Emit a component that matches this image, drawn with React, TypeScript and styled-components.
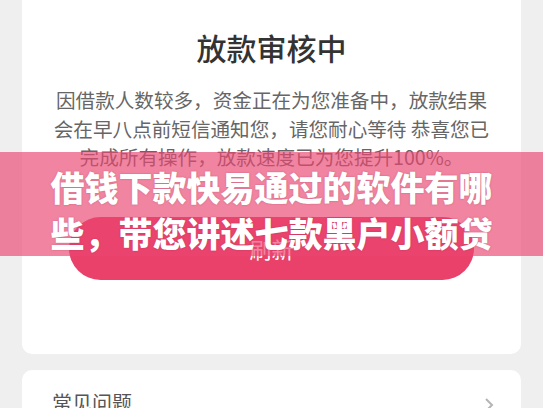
import React from 'react'
import styled, { createGlobalStyle } from 'styled-components'

const GlobalStyle = createGlobalStyle`
  html, body {
    margin: 0;
    padding: 0;
    background: #efefef;
    overflow: hidden;
  }
  body {
    font-family: "Noto Sans CJK SC", "Noto Sans", sans-serif;
  }
`

function App() {
  return (
    <>
      <GlobalStyle />
      <Page>
        <StatusCard>
          <Title>放款审核中</Title>
          <Message>
            因借款人数较多，资金正在为您准备中，放款结果
            <br />
            会在早八点前短信通知您，请您耐心等待 恭喜您已
            <br />
            完成所有操作，放款速度已为您提升100%。
          </Message>
          <RefreshButton>刷新</RefreshButton>
        </StatusCard>
        <FaqCard>
          <FaqLabel>常见问题</FaqLabel>
          <Chevron viewBox='0 0 16 16'>
            <path d='M5 2 L11 8 L5 14' />
          </Chevron>
        </FaqCard>
        <Banner>
          借钱下款快易通过的软件有哪
          <br />
          些，带您讲述七款黑户小额贷
        </Banner>
      </Page>
    </>
  )
}

export default App

const Page = styled.div`
  display: flex;
  flex-direction: column;
  gap: 16px;
  height: 408px;
  padding: 0 22px;
  position: relative;
  width: 543px;
  box-sizing: border-box;
`

const StatusCard = styled.div`
  align-items: center;
  background: #ffffff;
  border-radius: 0 0 10px 10px;
  display: flex;
  flex-direction: column;
  padding: 27px 47px 74px;
`

const Title = styled.h1`
  color: #333333;
  font-size: 30px;
  font-weight: 500;
  line-height: 40px;
  margin: 0;
`

const Message = styled.p`
  color: #666666;
  font-size: 19.6px;
  line-height: 28.5px;
  margin: 19px -40px 0;
  text-align: center;
  white-space: nowrap;
`

const RefreshButton = styled.button`
  background: #e9416a;
  border: none;
  border-radius: 32px;
  color: #ffffff;
  font-family: inherit;
  font-size: 22px;
  height: 63px;
  margin-top: 45px;
  width: 100%;
`

const FaqCard = styled.div`
  align-items: center;
  background: #ffffff;
  border-radius: 10px;
  display: flex;
  height: 70px;
  justify-content: space-between;
  padding: 0 24px 0 30px;
  align-items: flex-start;
  padding-top: 19px;
`

const FaqLabel = styled.span`
  color: #555555;
  font-size: 20px;
  line-height: 28px;
`

const Chevron = styled.svg`
  fill: none;
  height: 16px;
  margin-top: 8px;
  stroke: #b5b5b5;
  stroke-width: 2;
  width: 16px;
`

const Banner = styled.div`
  background: rgba(234, 70, 113, 0.66);
  color: #ffffff;
  font-size: 34px;
  font-weight: 900;
  height: 104px;
  left: 0;
  line-height: 46px;
  padding-top: 12px;
  position: absolute;
  right: 0;
  text-align: center;
  text-shadow: 0 0 2px rgba(120, 20, 50, 0.35);
  top: 152px;
  box-sizing: border-box;
`
